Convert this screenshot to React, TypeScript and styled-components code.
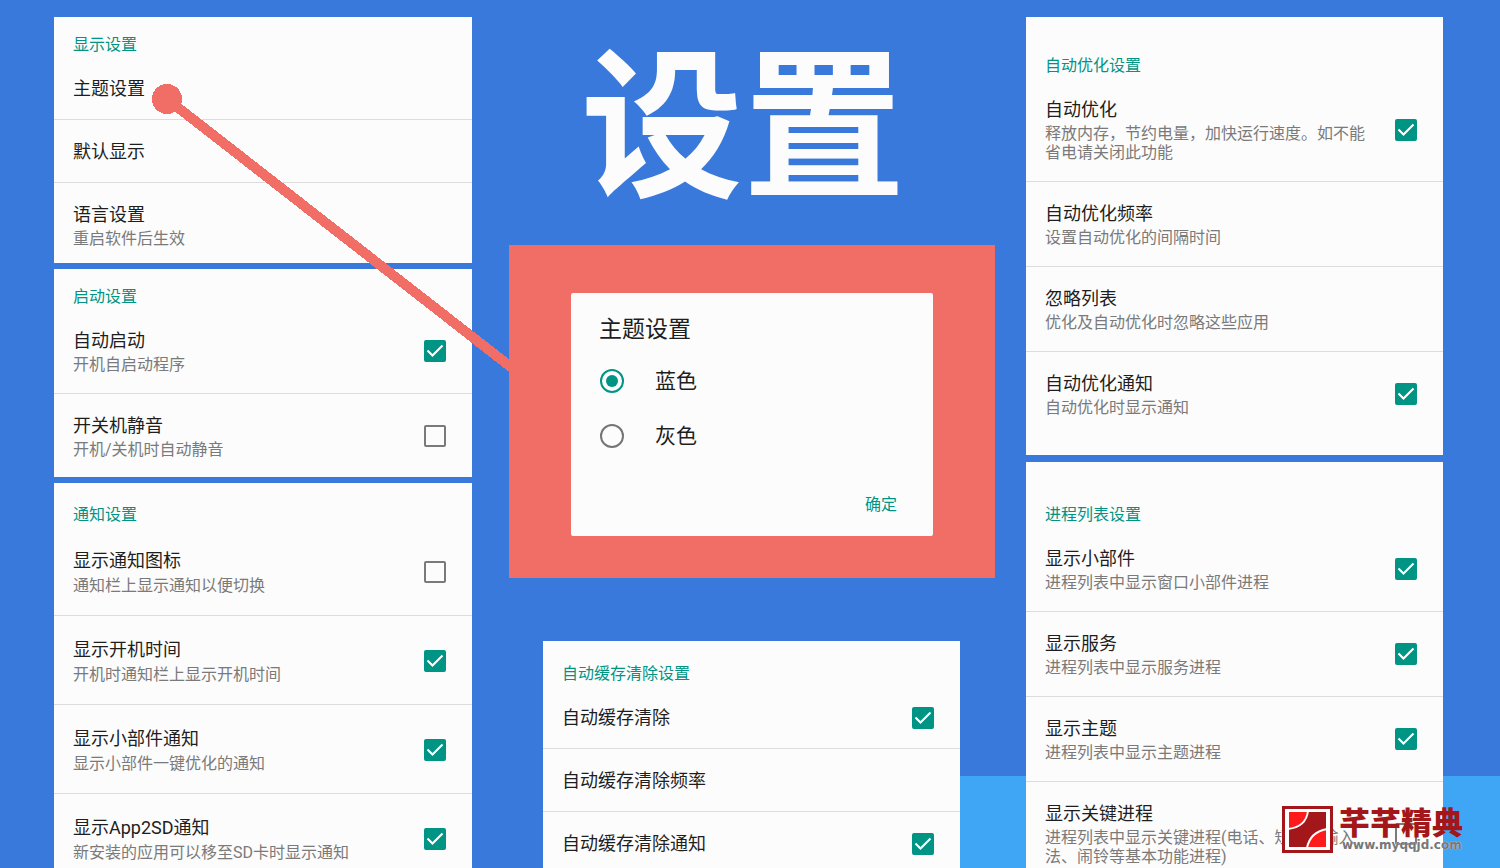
import React, { useId, useState } from 'react';
import styled, { createGlobalStyle } from 'styled-components';

const teal = '#009485';
const coral = '#f16e66';
const paper = '#fcfcfc';

const GlobalStyle = createGlobalStyle`
  *, *::before, *::after { box-sizing: border-box; }
  body {
    margin: 0;
    background: #3979dc;
    font-family: Roboto, 'Noto Sans CJK SC', sans-serif;
  }
`;

const Poster = styled.main`
  position: relative;
  display: grid;
  grid-template-columns: minmax(0, 418fr) minmax(0, 554fr) minmax(0, 417fr);
  min-height: 100vh;
  padding: 17px 57px 0 54px;
  overflow: hidden;
  background: linear-gradient(#3fa5f5, #3fa5f5) right bottom / 40% 92px no-repeat #3979dc;
`;

const Column = styled.div<{ $gap: number }>`
  display: flex;
  flex-direction: column;
  gap: ${(p) => p.$gap}px;
`;

const Centre = styled.div`
  display: flex;
  flex-direction: column;
  padding: 0 31px 0 37px;
`;

const Headline = styled.h1`
  height: 228px;
  margin: 0;
  padding-right: 18px;
  color: ${paper};
  font: 700 162px/224px 'Liberation Sans', 'Noto Sans CJK SC', sans-serif;
  text-align: center;
  white-space: nowrap;
`;

const Card = styled.section<{ $fill?: boolean; $bottom?: number }>`
  flex: ${(p) => (p.$fill ? '1 0 auto' : '0 0 auto')};
  padding-bottom: ${(p) => p.$bottom ?? 0}px;
  background: ${paper};
`;

const CentreCard = styled(Card)`
  margin: 63px 35px 0 34px;
`;

const CardHeading = styled.h2<{ $top: number }>`
  margin: 0;
  padding: ${(p) => p.$top}px 19px 2px;
  color: ${teal};
  font-size: 16px;
  font-weight: 400;
  line-height: 20px;
`;

type RowStyle = { $roomy?: boolean; $single?: boolean };

const Row = styled.label<RowStyle>`
  display: flex;
  align-items: center;
  gap: 24px;
  width: 100%;
  margin: 0;
  padding: ${(p) => (p.$roomy ? '21px 26px 20px 19px' : p.$single ? '19px 26px 17px 19px' : '19px 26px 19px 19px')};
  border: 0;
  border-bottom: 1px solid #dcdcdc;
  background: none;
  font: inherit;
  text-align: left;
  cursor: pointer;

  &:last-child {
    padding-bottom: 0;
    border-bottom: 0;
  }
`;

const RowText = styled.span<{ $roomy?: boolean }>`
  display: flex;
  flex: 1;
  flex-direction: column;
  gap: ${(p) => (p.$roomy ? 2 : 1)}px;
  min-width: 0;
`;

const RowTitle = styled.span`
  color: #1e1e1e;
  font-size: 18px;
  line-height: 26px;
`;

const RowNote = styled.span`
  color: #7a7a7a;
  font-size: 16px;
  line-height: 19px;
`;

const TickBox = styled.span`
  display: grid;
  flex: none;
  width: 22px;
  height: 22px;

  > * { grid-area: 1 / 1; }
  svg { width: 22px; height: 22px; pointer-events: none; }
`;

const TickInput = styled.input`
  width: 22px;
  height: 22px;
  margin: 0;
  appearance: none;
  border: 2px solid #7a7a7a;
  border-radius: 2px;

  &:checked {
    border-color: ${teal};
    background: ${teal};
  }
`;

const Frame = styled.div`
  padding: 48px 62px 42px;
  background: ${coral};
`;

const Dialog = styled.form`
  display: flex;
  flex-direction: column;
  padding: 22px 36px 19px 28px;
  border-radius: 2px;
  background: ${paper};
`;

const DialogTitle = styled.h2`
  margin: 0 0 8px;
  color: #1e1e1e;
  font-size: 23px;
  font-weight: 400;
  line-height: 30px;
`;

const Option = styled.label`
  display: flex;
  align-items: center;
  gap: 31px;
  height: 55px;
  color: #1e1e1e;
  font-size: 21px;
  line-height: 30px;
  cursor: pointer;
`;

const RadioInput = styled.input`
  display: grid;
  place-items: center;
  width: 24px;
  height: 24px;
  margin: 0 0 0 1px;
  appearance: none;
  border: 2px solid #757575;
  border-radius: 50%;

  &:checked { border-color: ${teal}; }
  &:checked::after {
    width: 12px;
    height: 12px;
    border-radius: 50%;
    background: ${teal};
    content: '';
  }
`;

const Confirm = styled.button`
  align-self: flex-end;
  margin: 30px 0 0;
  padding: 0;
  border: 0;
  background: none;
  color: ${teal};
  font: inherit;
  font-size: 16px;
  line-height: 24px;
  cursor: pointer;
`;

const Pointer = styled.svg`
  position: absolute;
  top: 0;
  left: 0;
  width: 510px;
  height: 380px;
  pointer-events: none;
`;

const Stamp = styled.a`
  position: absolute;
  right: 35px;
  bottom: 14px;
  display: flex;
  gap: 6px;
  text-decoration: none;
  svg { width: 51px; height: 48px; }
`;

const StampText = styled.span`
  display: flex;
  flex-direction: column;
  width: 126px;
  white-space: nowrap;
`;

const StampName = styled.span`
  color: #a31619;
  font: 900 31px/30px 'Noto Sans CJK SC', sans-serif;
`;

const StampUrl = styled.span`
  padding-left: 3px;
  color: #777777;
  font: 700 12px/18px 'DejaVu Sans', sans-serif;
  text-shadow: 0 0 1px #ffffff;
`;

type Item = { title: string; note?: string; checked?: boolean };

function Tick({ id, initial }: { id: string; initial: boolean }) {
  const [on, setOn] = useState(initial);
  return (
    <TickBox>
      <TickInput id={id} type="checkbox" checked={on} onChange={() => setOn(!on)} />
      {on && (
        <svg viewBox="0 0 22 22" aria-hidden="true">
          <path d="M3.5 10.5 8.5 15.5 18.5 5.5" fill="none" stroke="#fff" strokeWidth="2.1" />
        </svg>
      )}
    </TickBox>
  );
}

function Setting({ item, roomy }: { item: Item; roomy?: boolean }) {
  const id = useId();
  const text = (
    <RowText $roomy={roomy}>
      <RowTitle>{item.title}</RowTitle>
      {item.note && <RowNote>{item.note}</RowNote>}
    </RowText>
  );
  if (item.checked === undefined) {
    return (
      <Row as="button" $roomy={roomy} $single={!item.note}>
        {text}
      </Row>
    );
  }
  return (
    <Row htmlFor={id} $roomy={roomy} $single={!item.note}>
      {text}
      <Tick id={id} initial={item.checked} />
    </Row>
  );
}

const Rows = ({ items, roomy }: { items: Item[]; roomy?: boolean }) => (
  <div>
    {items.map((item) => (
      <Setting key={item.title} item={item} roomy={roomy} />
    ))}
  </div>
);

const display: Item[] = [
  { title: '主题设置' },
  { title: '默认显示' },
  { title: '语言设置', note: '重启软件后生效' },
];

const startup: Item[] = [
  { title: '自动启动', note: '开机自启动程序', checked: true },
  { title: '开关机静音', note: '开机/关机时自动静音', checked: false },
];

const notices: Item[] = [
  { title: '显示通知图标', note: '通知栏上显示通知以便切换', checked: false },
  { title: '显示开机时间', note: '开机时通知栏上显示开机时间', checked: true },
  { title: '显示小部件通知', note: '显示小部件一键优化的通知', checked: true },
  { title: '显示App2SD通知', note: '新安装的应用可以移至SD卡时显示通知', checked: true },
];

const cache: Item[] = [
  { title: '自动缓存清除', checked: true },
  { title: '自动缓存清除频率' },
  { title: '自动缓存清除通知', checked: true },
];

const optimise: Item[] = [
  { title: '自动优化', note: '释放内存，节约电量，加快运行速度。如不能省电请关闭此功能', checked: true },
  { title: '自动优化频率', note: '设置自动优化的间隔时间' },
  { title: '忽略列表', note: '优化及自动优化时忽略这些应用' },
  { title: '自动优化通知', note: '自动优化时显示通知', checked: true },
];

const processes: Item[] = [
  { title: '显示小部件', note: '进程列表中显示窗口小部件进程', checked: true },
  { title: '显示服务', note: '进程列表中显示服务进程', checked: true },
  { title: '显示主题', note: '进程列表中显示主题进程', checked: true },
  { title: '显示关键进程', note: '进程列表中显示关键进程(电话、短信、输入法、闹铃等基本功能进程)', checked: false },
];

export default function App() {
  const [theme, setTheme] = useState('蓝色');
  return (
    <>
      <GlobalStyle />
      <Poster>
        <Column $gap={6}>
          <Card $bottom={15}>
            <CardHeading $top={18}>显示设置</CardHeading>
            <Rows items={display} />
          </Card>
          <Card $bottom={18}>
            <CardHeading $top={18}>启动设置</CardHeading>
            <Rows items={startup} />
          </Card>
          <Card $fill>
            <CardHeading $top={22}>通知设置</CardHeading>
            <Rows items={notices} roomy />
          </Card>
        </Column>

        <Centre>
          <Headline>设置</Headline>
          <Frame>
            <Dialog onSubmit={(e) => e.preventDefault()}>
              <DialogTitle>主题设置</DialogTitle>
              {['蓝色', '灰色'].map((name) => (
                <Option key={name}>
                  <RadioInput
                    type="radio"
                    name="theme"
                    value={name}
                    checked={theme === name}
                    onChange={() => setTheme(name)}
                  />
                  {name}
                </Option>
              ))}
              <Confirm type="submit">确定</Confirm>
            </Dialog>
          </Frame>
          <CentreCard $fill>
            <CardHeading $top={23}>自动缓存清除设置</CardHeading>
            <Rows items={cache} />
          </CentreCard>
        </Centre>

        <Column $gap={7}>
          <Card $bottom={38}>
            <CardHeading $top={39}>自动优化设置</CardHeading>
            <Rows items={optimise} />
          </Card>
          <Card $fill>
            <CardHeading $top={43}>进程列表设置</CardHeading>
            <Rows items={processes} />
          </Card>
        </Column>

        <Pointer viewBox="0 0 510 380" shapeRendering="crispEdges" aria-hidden="true">
          <circle cx="167" cy="99" r="15" fill={coral} />
          <path d="M167 99 516 371" stroke={coral} strokeWidth="10" />
        </Pointer>

        <Stamp href="#top">
          <svg viewBox="0 0 51 48" aria-hidden="true">
            <rect width="51" height="47" fill="#a31619" />
            <rect x="3" y="3" width="45" height="41" fill="#fff" />
            <rect x="7" y="6" width="37" height="35" fill="#a31619" />
            <path d="M7 6H26Q24 21 7 23Z" fill="#ff1a1c" />
            <path d="M44 23V41H25Q28 26 44 23Z" fill="#ff1a1c" />
            <path d="M26 5Q24 21 6 23M45 23Q28 26 25 42" fill="none" stroke="#fff" strokeWidth="2" />
          </svg>
          <StampText>
            <StampName>芊芊精典</StampName>
            <StampUrl>www.myqqjd.com</StampUrl>
          </StampText>
        </Stamp>
      </Poster>
    </>
  );
}
